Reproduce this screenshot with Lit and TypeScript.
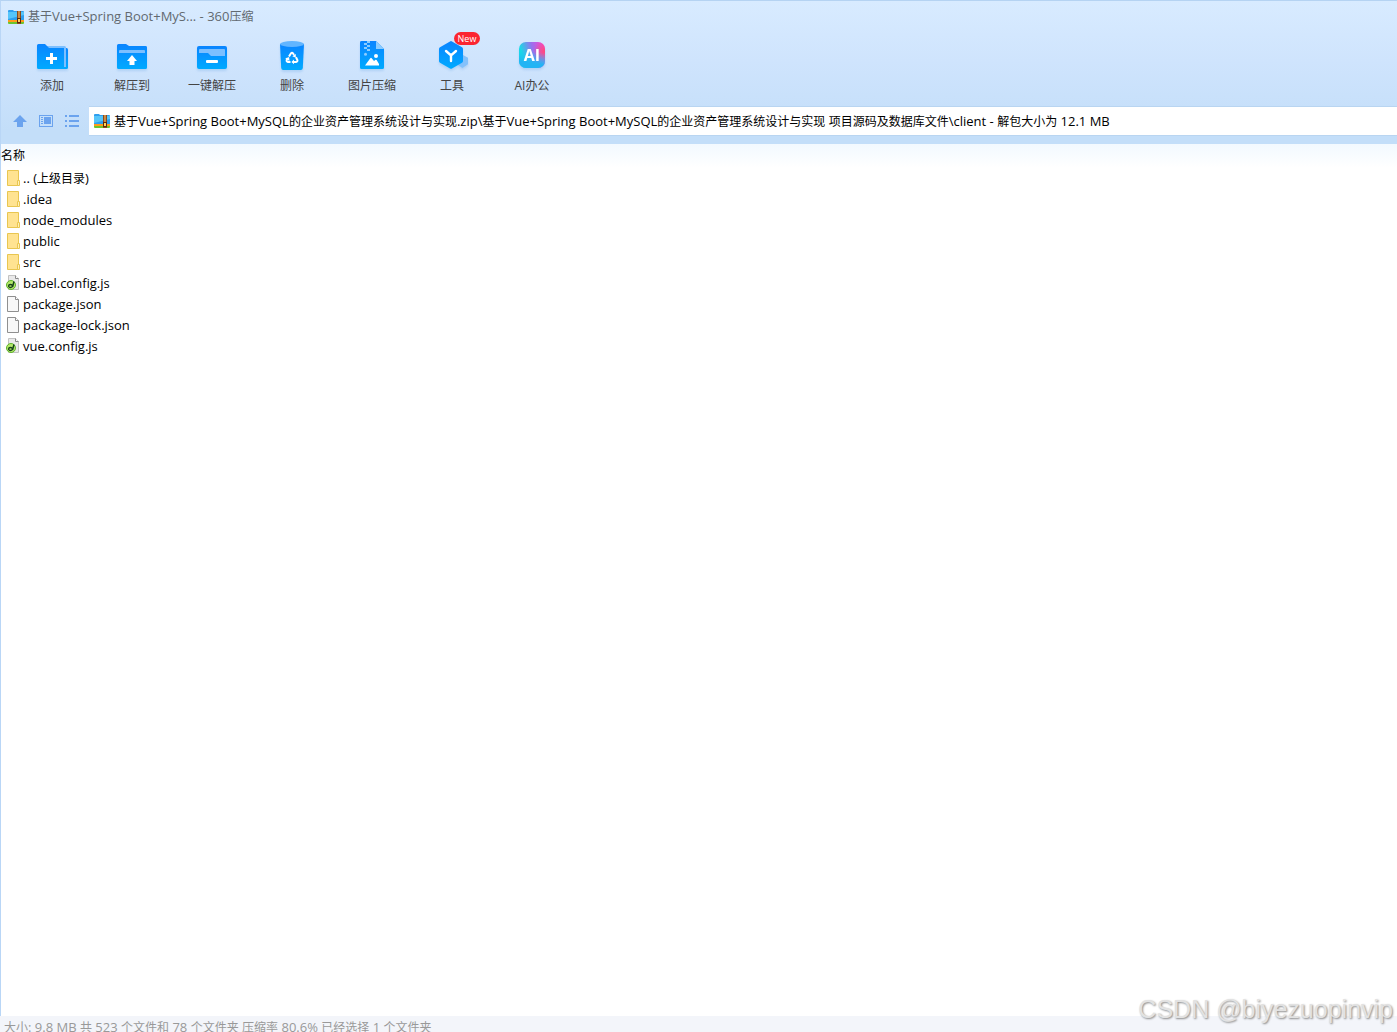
import { LitElement, html, css, svg } from "lit";
import { customElement, property } from "lit/decorators.js";

const archiveIcon = html`<svg class="archive" viewBox="0 0 16 14" width="16" height="14" aria-hidden="true">
  <path d="M0 1q0-1 1-1h4l1 1h9q1 0 1 1v9H0z" fill="#2f9fef"/>
  <path d="M0 2h16v3L0 9z" fill="#55c5fa"/>
  <path d="M0 10h16v2H0z" fill="#ff9c1a"/>
  <path d="M0 12h16v1q0 1-1 1H1q-1 0-1-1z" fill="#6cc42e"/>
  <path d="M9 1h4v13H9z" fill="#8a4a1c"/>
  <path d="M10 1h2v7h-2z" fill="#c98a45"/>
  <path d="M9 8h4v5H9z" fill="#5c2a0c"/>
  <path d="M10 9h2v3h-2z" fill="#ffd15c"/>
</svg>`;

const blueFill = svg`<defs><linearGradient id="g" x1="0" y1="0" x2="0" y2="1">
  <stop offset="0" stop-color="#0a84ff"/><stop offset="1" stop-color="#00aaff"/>
</linearGradient></defs>`;

const toolArt: Record<string, unknown> = {
  add: svg`
    <path d="M27 8h3.500a1.500 1.500 0 0 1 1.500 1.500V27.500a1.500 1.500 0 0 1-1.500 1.500H24z" fill="url(#g)"/>
    <path d="M10 6h18.500a1.500 1.500 0 0 1 1.500 1.500V27H24z" fill="#7cbfff"/>
    <path d="M1 5.500A1.500 1.500 0 0 1 2.500 4H9l4 4h15v21H2.500A1.500 1.500 0 0 1 1 27.500z" fill="url(#g)"/>
    <path d="M14 13h3v4h4v3h-4v4h-3v-4h-4v-3h4z" fill="#fff"/>`,
  extract: svg`
    <path d="M1 5.500A1.500 1.500 0 0 1 2.500 4H10l3 2h16.500A1.500 1.500 0 0 1 31 7.500v20a1.500 1.500 0 0 1-1.500 1.500h-27A1.500 1.500 0 0 1 1 27.500z" fill="url(#g)"/>
    <path d="M3 11a1 1 0 0 1 1-1h24a1 1 0 0 1 1 1v2H3z" fill="#7cbfff"/>
    <path d="M16 15l5 6h-2.500v4h-5v-4H11z" fill="#fff"/>`,
  quick: svg`
    <rect x="1" y="6" width="30" height="23" rx="2" fill="url(#g)"/>
    <path d="M3 10a1 1 0 0 1 1-1h24a1 1 0 0 1 1 1v6H15l-3-3H3z" fill="#7cbfff"/>
    <rect x="10" y="20" width="12" height="3" rx="1" fill="#fff"/>`,
  remove: svg`
    <path d="M4 4h24l-1.200 24q-.2 2-2 2H7.200q-1.800 0-2-2z" fill="url(#g)"/>
    <ellipse cx="16" cy="4" rx="12" ry="3" fill="#62b5ff"/>
    <g fill="none" stroke="#fff" stroke-width="2">
      <path d="M13 16.500l2-3.200q1-1.200 2 0l1 1.700"/>
      <path d="M20 17.300l1.400 2.700q.4 1.600-1.400 2h-2.500"/>
      <path d="M14.500 22H12q-1.800-.4-1.300-2l1-1.800"/>
    </g>
    <path d="M16.300 16.300l3.500-2.400v3.800zM18 19.500v4.800L15.400 22zM9.200 18.400l3.900-1.500.4 4z" fill="#fff"/>`,
  picture: svg`
    <path d="M4 2.500A1.500 1.500 0 0 1 5.500 1H20l8 8v18.500a1.500 1.500 0 0 1-1.500 1.500h-21A1.500 1.500 0 0 1 4 27.500z" fill="url(#g)"/>
    <path d="M20 1l8 8h-8z" fill="#8cccff"/>
    <path d="M11 1h3v2h-3zM8 3h3v2H8zM11 5h3v2h-3zM8 7h3v2H8zM11 9h3v2h-3z" fill="#8cccff"/>
    <circle cx="9.500" cy="14.300" r="1.500" fill="#8cccff"/>
    <circle cx="20" cy="16" r="2" fill="#fff"/>
    <path d="M9 25.500l5.300-7.300q.7-.7 1.400 0L18 21l1.500-1.200q.6-.4 1.100.2L23 24v1.500z" fill="#fff"/>`,
  tools: svg`
    <path d="M27 15l5 2.800v6.500L26.500 28 21 24.500z" fill="#84c1fb"/>
    <path d="M14 1.400q1-.6 2 0l10 5.800q1 .6 1 1.700v12q0 1.200-1 1.800l-10 5.700q-1 .6-2 0L4 22.700q-1-.6-1-1.800v-12q0-1.100 1-1.700z" fill="url(#g)"/>
    <path d="M10 11l5 4.500 5-4.500M15 15v6" fill="none" stroke="#fff" stroke-width="2.400" stroke-linecap="round"/>`,
  ai: svg`
    <defs>
      <linearGradient id="a" x1="0" y1="0.300" x2="1" y2="0">
        <stop offset="0.050" stop-color="#17dbe6"/><stop offset="0.500" stop-color="#9a70ee"/><stop offset="0.900" stop-color="#f04ad8"/>
      </linearGradient>
      <radialGradient id="b" cx="1" cy="0.350" r="0.450">
        <stop offset="0" stop-color="#ff4a78"/><stop offset="1" stop-color="#ff4a78" stop-opacity="0"/>
      </radialGradient>
      <linearGradient id="c" x1="0.500" y1="0.350" x2="0.400" y2="1">
        <stop offset="0" stop-color="#20c8f0" stop-opacity="0"/><stop offset="0.700" stop-color="#22b4f4"/>
      </linearGradient>
    </defs>
    <rect x="3" y="2" width="26" height="26" rx="7" fill="url(#a)"/>
    <rect x="3" y="2" width="26" height="26" rx="7" fill="url(#b)"/>
    <rect x="3" y="2" width="26" height="26" rx="7" fill="url(#c)"/>
    <text x="16" y="21" text-anchor="middle" fill="#fff" font-family="Open Sans, sans-serif" font-weight="700" font-size="16">AI</text>`,
};

const folderIcon = html`<svg viewBox="0 0 14 16" width="14" height="16" aria-hidden="true">
  <path d="M0.500 0.500h11v15h-11z" fill="#ffe391" stroke="#e9c650"/>
  <path d="M10.500 10.500h2v5h-2z" fill="#fff0b8" stroke="#e9c650"/>
</svg>`;

const pageIcon = html`<svg viewBox="0 0 14 16" width="14" height="16" aria-hidden="true">
  <path d="M0.500 0.500h8l3 3v12h-11z" fill="#f8f8f8" stroke="#8f8f8f"/>
  <path d="M8.500 0.500v3h3" fill="#fff" stroke="#8f8f8f"/>
</svg>`;

const scriptIcon = html`<svg class="script" viewBox="0 0 14 16" width="14" height="16" aria-hidden="true">
  <path d="M1.500 0.500h7l3 3v11h-10z" fill="#e9e9e9" stroke="#c2c2c2"/>
  <path d="M8.500 0.500v3h3" fill="#fff" stroke="#8a8a8a"/>
  <circle cx="4" cy="10" r="4.500" fill="#b4e86a" stroke="#5db32a"/>
  <ellipse cx="3.500" cy="11" rx="1.900" ry="1.500" fill="none" stroke="#14401a" stroke-width="1.300"/>
  <path d="M7 6.500L5.500 12" fill="none" stroke="#14401a" stroke-width="1.500"/>
</svg>`;

const tools = [
  { art: "add", label: "添加" },
  { art: "extract", label: "解压到" },
  { art: "quick", label: "一键解压" },
  { art: "remove", label: "删除" },
  { art: "picture", label: "图片压缩" },
  { art: "tools", label: "工具", badge: "New" },
  { art: "ai", label: "AI办公" },
];

const files = [
  { icon: folderIcon, name: ".. (上级目录)" },
  { icon: folderIcon, name: ".idea" },
  { icon: folderIcon, name: "node_modules" },
  { icon: folderIcon, name: "public" },
  { icon: folderIcon, name: "src" },
  { icon: scriptIcon, name: "babel.config.js" },
  { icon: pageIcon, name: "package.json" },
  { icon: pageIcon, name: "package-lock.json" },
  { icon: scriptIcon, name: "vue.config.js" },
];

const address =
  "基于Vue+Spring Boot+MySQL的企业资产管理系统设计与实现.zip\\基于Vue+Spring Boot+MySQL的企业资产管理系统设计与实现 项目源码及数据库文件\\client - 解包大小为 12.1 MB";

// Latin runs are set one size larger than the Chinese around them.
const mixed = (text: string) =>
  text
    .split(/([\u4e00-\u9fff]+)/)
    .filter(Boolean)
    .map((run) => (/[\u4e00-\u9fff]/.test(run) ? run : html`<span class="latin">${run}</span>`));

@customElement("tool-button")
class ToolButton extends LitElement {
  @property() art = "";
  @property() label = "";
  @property() badge = "";

  static styles = css`
    :host { display: block; width: 80px; }
    .tool {
      position: relative; display: flex; flex-direction: column; align-items: center; gap: 4px;
      width: 100%; padding: 0; border: 0; background: none; color: #444;
      font: inherit; line-height: 20px; white-space: nowrap;
    }
    .art { display: block; filter: drop-shadow(0 2px 1px rgba(60, 140, 220, 0.2)); }
    .badge {
      position: absolute; left: 42px; top: -8px; width: 26px; height: 13px; border-radius: 7px;
      background: #fb2530; color: #fff; font-size: 9px; line-height: 13px; text-align: center;
    }
  `;

  render() {
    return html`<button class="tool" type="button">
      <svg class="art" viewBox="0 0 32 32" width="32" height="32" aria-hidden="true">${blueFill}${toolArt[this.art]}</svg>
      <span>${this.label}</span>
      ${this.badge ? html`<span class="badge">${this.badge}</span>` : null}
    </button>`;
  }
}

@customElement("app-root")
class AppRoot extends LitElement {
  static styles = css`
    :host {
      display: flex; flex-direction: column; box-sizing: border-box; height: 100vh; overflow: hidden;
      background: #fff; color: #000;
      font: 12px/20px "Open Sans", "Noto Sans CJK SC", sans-serif;
    }
    .latin { font-size: 13px; }
    .head {
      border-top: 1px solid #b5d3f2; border-left: 1px solid #b9d6f6;
      background: linear-gradient(#d8ebff, #cfe4fd 60px, #c3def9 130px);
    }
    .title { display: flex; align-items: center; gap: 4px; height: 31px; padding-left: 7px; color: #626970; }
    h1 { margin: 0; font: inherit; }
    .archive { display: block; flex: none; }
    .tools { display: flex; padding: 8px 0 0 11px; height: 66px; }
    .nav { display: flex; align-items: center; padding-bottom: 8px; }
    .steps { display: flex; gap: 10px; width: 88px; padding-left: 11px; box-sizing: border-box; }
    .step { display: block; width: 16px; height: 16px; padding: 0; border: 0; background: none; }
    .step svg { display: block; }
    .address {
      flex: 1; min-width: 0; display: flex; align-items: center; gap: 4px; height: 28px; padding-left: 5px;
      background: #fff; border-top: 1px solid #b9d5f1; border-bottom: 1px solid #b9d5f1;
    }
    .path { flex: 1; min-width: 0; overflow: hidden; white-space: nowrap; }
    .list { flex: 1; min-height: 0; overflow: hidden; border-left: 1px solid #b9d6f6; }
    .files { width: 100%; border-collapse: collapse; }
    th {
      height: 24px; padding: 0; text-align: left; font-weight: 400;
      background: linear-gradient(#f2f9ff, #fff);
    }
    td { padding: 0 0 0 6px; }
    .entry {
      display: flex; align-items: flex-start; gap: 2px; box-sizing: border-box;
      height: 21px; padding-top: 2px; line-height: 16px;
    }
    .script { overflow: visible; }
    .status {
      flex: none; height: 16px; overflow: hidden; padding-left: 4px;
      background: #f3f5fa; color: #999; line-height: 22px; white-space: nowrap;
    }
    .mark {
      position: absolute; right: 4px; bottom: 9px; color: #e2e2e2;
      font: 25px/28px "Liberation Sans", sans-serif; text-shadow: 1px 1px 2px #888;
    }
  `;

  render() {
    return html`
      <header class="head">
        <div class="title">${archiveIcon}<h1>${mixed("基于Vue+Spring Boot+MyS... - 360压缩")}</h1></div>
        <div class="tools">
          ${tools.map((t) => html`<tool-button .art=${t.art} .label=${t.label} .badge=${t.badge ?? ""}></tool-button>`)}
        </div>
        <div class="nav">
          <div class="steps">
            <button class="step" type="button" aria-label="向上">
              <svg viewBox="0 0 16 16" width="16" height="16"><path d="M8 2l7 7h-4v5H5V9H1z" fill="#6ba3ee"/></svg>
            </button>
            <button class="step" type="button" aria-label="预览">
              <svg viewBox="0 0 16 16" width="16" height="16" fill="#6ba3ee"><path d="M1 2h14v12H1zM2 3v10h12V3z" fill-rule="evenodd"/><path d="M3 4h2v1H3zM3 6h2v1H3zM3 8h2v1H3zM3 10h2v1H3zM6 4h7v7H6z"/></svg>
            </button>
            <button class="step" type="button" aria-label="列表">
              <svg viewBox="0 0 16 16" width="16" height="16" fill="#6ba3ee"><path d="M1 2h2v2H1zM5 2h10v2H5zM1 7h2v2H1zM5 7h10v2H5zM1 12h2v2H1zM5 12h10v2H5z"/></svg>
            </button>
          </div>
          <div class="address">${archiveIcon}<div class="path">${mixed(address)}</div></div>
        </div>
      </header>
      <main class="list">
        <table class="files">
          <thead><tr><th scope="col">名称</th></tr></thead>
          <tbody>
            ${files.map((f) => html`<tr><td><div class="entry">${f.icon}<span>${mixed(f.name)}</span></div></td></tr>`)}
          </tbody>
        </table>
      </main>
      <footer class="status">${mixed("大小: 9.8 MB 共 523 个文件和 78 个文件夹 压缩率 80.6% 已经选择 1 个文件夹")}</footer>
      <div class="mark">CSDN @biyezuopinvip</div>
    `;
  }
}
